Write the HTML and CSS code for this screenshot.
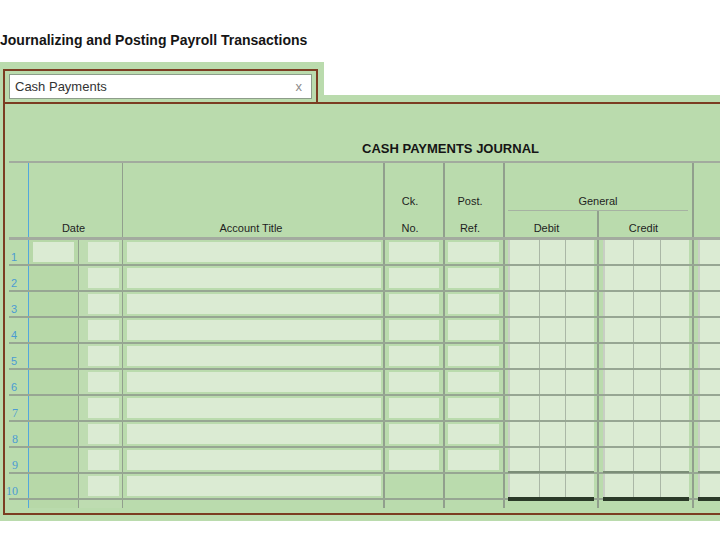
FILE: index.html
```html
<!DOCTYPE html>
<html lang="en">
<head>
<meta charset="utf-8">
<title>Cash Payments Journal</title>
<link rel="stylesheet" href="styles.css">
</head>
<body>
<h1 class="title">Journalizing and Posting Payroll Transactions</h1>

<div class="tabs">
  <div class="tab-outer">
    <div class="tab-box">
      <div class="search"><span>Cash Payments</span><span class="close">x</span></div>
    </div>
  </div>
  <div class="tab-rest"></div>
</div>

<div class="sheet">
  <div class="panel">
    <div class="jtitle">CASH PAYMENTS JOURNAL</div>
    <div class="table">
      <div class="hdr">
        <div class="h num"></div>
        <div class="h date"><span>Date</span></div>
        <div class="h acct"><span>Account Title</span></div>
        <div class="h ck"><span>Ck.</span><span class="l2">No.</span></div>
        <div class="h post"><span>Post.</span><span class="l2">Ref.</span></div>
        <div class="h gen">
          <span>General</span>
          <div class="gsub"><span class="gdeb">Debit</span><span class="gcred">Credit</span></div>
        </div>
        <div class="h ext"></div>
      </div>

      <div class="row">
        <div class="c num">1</div>
        <div class="c mon"><span class="f"></span></div>
        <div class="c day"><span class="f"></span></div>
        <div class="c acct"><span class="f"></span></div>
        <div class="c ck"><span class="f"></span></div>
        <div class="c post"><span class="f"></span></div>
        <div class="c deb"><span class="f"><i></i><i></i><i></i></span></div>
        <div class="c cred"><span class="f"><i></i><i></i><i></i></span></div>
        <div class="c ext"><span class="f"><i></i></span></div>
      </div>
      <div class="row">
        <div class="c num">2</div>
        <div class="c mon"></div>
        <div class="c day"><span class="f"></span></div>
        <div class="c acct"><span class="f"></span></div>
        <div class="c ck"><span class="f"></span></div>
        <div class="c post"><span class="f"></span></div>
        <div class="c deb"><span class="f"><i></i><i></i><i></i></span></div>
        <div class="c cred"><span class="f"><i></i><i></i><i></i></span></div>
        <div class="c ext"><span class="f"><i></i></span></div>
      </div>
      <div class="row">
        <div class="c num">3</div>
        <div class="c mon"></div>
        <div class="c day"><span class="f"></span></div>
        <div class="c acct"><span class="f"></span></div>
        <div class="c ck"><span class="f"></span></div>
        <div class="c post"><span class="f"></span></div>
        <div class="c deb"><span class="f"><i></i><i></i><i></i></span></div>
        <div class="c cred"><span class="f"><i></i><i></i><i></i></span></div>
        <div class="c ext"><span class="f"><i></i></span></div>
      </div>
      <div class="row">
        <div class="c num">4</div>
        <div class="c mon"></div>
        <div class="c day"><span class="f"></span></div>
        <div class="c acct"><span class="f"></span></div>
        <div class="c ck"><span class="f"></span></div>
        <div class="c post"><span class="f"></span></div>
        <div class="c deb"><span class="f"><i></i><i></i><i></i></span></div>
        <div class="c cred"><span class="f"><i></i><i></i><i></i></span></div>
        <div class="c ext"><span class="f"><i></i></span></div>
      </div>
      <div class="row">
        <div class="c num">5</div>
        <div class="c mon"></div>
        <div class="c day"><span class="f"></span></div>
        <div class="c acct"><span class="f"></span></div>
        <div class="c ck"><span class="f"></span></div>
        <div class="c post"><span class="f"></span></div>
        <div class="c deb"><span class="f"><i></i><i></i><i></i></span></div>
        <div class="c cred"><span class="f"><i></i><i></i><i></i></span></div>
        <div class="c ext"><span class="f"><i></i></span></div>
      </div>
      <div class="row">
        <div class="c num">6</div>
        <div class="c mon"></div>
        <div class="c day"><span class="f"></span></div>
        <div class="c acct"><span class="f"></span></div>
        <div class="c ck"><span class="f"></span></div>
        <div class="c post"><span class="f"></span></div>
        <div class="c deb"><span class="f"><i></i><i></i><i></i></span></div>
        <div class="c cred"><span class="f"><i></i><i></i><i></i></span></div>
        <div class="c ext"><span class="f"><i></i></span></div>
      </div>
      <div class="row">
        <div class="c num sf">7</div>
        <div class="c mon"></div>
        <div class="c day"><span class="f"></span></div>
        <div class="c acct"><span class="f"></span></div>
        <div class="c ck"><span class="f"></span></div>
        <div class="c post"><span class="f"></span></div>
        <div class="c deb"><span class="f"><i></i><i></i><i></i></span></div>
        <div class="c cred"><span class="f"><i></i><i></i><i></i></span></div>
        <div class="c ext"><span class="f"><i></i></span></div>
      </div>
      <div class="row">
        <div class="c num sf">8</div>
        <div class="c mon"></div>
        <div class="c day"><span class="f"></span></div>
        <div class="c acct"><span class="f"></span></div>
        <div class="c ck"><span class="f"></span></div>
        <div class="c post"><span class="f"></span></div>
        <div class="c deb"><span class="f"><i></i><i></i><i></i></span></div>
        <div class="c cred"><span class="f"><i></i><i></i><i></i></span></div>
        <div class="c ext"><span class="f"><i></i></span></div>
      </div>
      <div class="row single">
        <div class="c num sf">9</div>
        <div class="c mon"></div>
        <div class="c day"><span class="f"></span></div>
        <div class="c acct"><span class="f"></span></div>
        <div class="c ck"><span class="f"></span></div>
        <div class="c post"><span class="f"></span></div>
        <div class="c deb"><span class="f"><i></i><i></i><i></i></span></div>
        <div class="c cred"><span class="f"><i></i><i></i><i></i></span></div>
        <div class="c ext"><span class="f"><i></i></span></div>
      </div>
      <div class="row double">
        <div class="c num sf">10</div>
        <div class="c mon"></div>
        <div class="c day"><span class="f"></span></div>
        <div class="c acct"><span class="f"></span></div>
        <div class="c ck"></div>
        <div class="c post"></div>
        <div class="c deb"><span class="f"><i></i><i></i><i></i></span></div>
        <div class="c cred"><span class="f"><i></i><i></i><i></i></span></div>
        <div class="c ext"><span class="f"><i></i></span></div>
      </div>
      <div class="foot">
        <div class="c num"></div>
        <div class="c mon"></div>
        <div class="c day"></div>
        <div class="c acct"></div>
        <div class="c ck"></div>
        <div class="c post"></div>
        <div class="c deb"></div>
        <div class="c cred"></div>
        <div class="c ext"></div>
      </div>
    </div>
  </div>
</div>
</body>
</html>
```

FILE: styles.css
```css
:root {
  --g: #badbad;
  --cell: #dbebd3;
  --brown: #7b3d22;
  --rowline: #97a693;
  --vline: #919f8d;
  --blue: #52a7dc;
  --cols: 20px 50px 44px 262px 60px 60px 94px 95px 1fr;
}

html, body {
  margin: 0;
  background: #fff;
}

body {
  width: 720px;
  height: 540px;
  overflow: hidden;
  font-family: "Liberation Sans", Arial, sans-serif;
  color: #222;
}

.title {
  margin: 0;
  padding-top: 32px;
  font-size: 14px;
  line-height: 16px;
  font-weight: bold;
  color: #151515;
}

.tabs {
  display: flex;
  align-items: flex-end;
  margin-top: 14px;
}

.tab-outer {
  width: 324px;
  box-sizing: border-box;
  background: var(--g);
  padding: 7px 6px 0 3px;
}

.tab-box {
  border: 2px solid var(--brown);
  border-bottom: 0;
  padding: 3px 4px;
}

.search {
  height: 25px;
  box-sizing: border-box;
  border: 1px solid #8d9d8a;
  background: #fff;
  display: flex;
  align-items: center;
  justify-content: space-between;
  padding: 0 9px 0 5px;
  font-size: 13px;
  color: #333;
}

.close {
  color: #8c8c8c;
  font-size: 13px;
}

.tab-rest {
  flex: 1;
  height: 7px;
  background: var(--g);
}

.sheet {
  background: var(--g);
  padding: 0 0 6px 3px;
}

.panel {
  border: 2px solid var(--brown);
  border-right: 0;
  padding: 37px 0 5px 4px;
}

.jtitle {
  margin-left: 353px;
  font-size: 13px;
  line-height: 16px;
  font-weight: bold;
  color: #151515;
}

.table {
  margin-top: 4px;
  border-top: 2px solid #a2ab9e;
}

/* header */
.hdr {
  display: grid;
  grid-template-columns: var(--cols);
  height: 74px;
  border-bottom: 3px solid #a3ab9f;
  font-size: 11px;
  line-height: 13px;
  color: #1e1e1e;
}

.h {
  display: flex;
  flex-direction: column;
  justify-content: flex-end;
  align-items: center;
  padding: 0 4px 2px 0;
  box-sizing: border-box;
  min-width: 0;
}

.h.num { border-right: 1px solid var(--blue); }
.h.date { grid-column: 2 / 4; border-right: 1px solid var(--vline); }
.h.acct { border-right: 2px solid var(--vline); }
.h.ck, .h.post { border-right: 2px solid var(--vline); padding-right: 8px; }
.h .l2 { margin-top: 14px; }

.h.gen {
  grid-column: 7 / 9;
  border-right: 2px solid var(--vline);
  padding: 0 4px 0 3px;
  align-items: stretch;
  text-align: center;
}

.gsub {
  margin-top: 2px;
  border-top: 1px solid #a6b2a2;
  display: grid;
  grid-template-columns: 91px 1fr;
}

.gsub span {
  padding: 11px 0 2px;
}

.gdeb {
  border-right: 2px solid var(--vline);
  padding-right: 12px !important;
}

/* body rows */
.row, .foot {
  display: grid;
  grid-template-columns: var(--cols);
}

.row {
  height: 26px;
  box-sizing: border-box;
  border-bottom: 2px solid var(--rowline);
}

.foot { height: 8px; }

.c {
  display: flex;
  box-sizing: border-box;
  min-width: 0;
}

.c.num { border-right: 1px solid var(--blue); }
.c.mon { border-right: 1px solid var(--vline); background: #b7d8a8; }
.c.day { border-right: 1px solid var(--vline); background: #bedcb1; }
.c.acct, .c.ck, .c.post, .c.deb, .c.cred { border-right: 2px solid var(--vline); }

.f {
  flex: 1;
  margin: 2px 4px;
  background: var(--cell);
}

.mon .f { margin: 2px 4px; }
.day .f { margin: 2px 3px 2px 9px; }
.acct .f { margin: 2px 2px 2px 4px; }
.ck .f { margin: 2px 4px 2px 4px; }
.post .f { margin: 2px 4px 2px 3px; }

.deb .f, .cred .f, .ext .f {
  display: grid;
  margin: 0 3px 0 3px;
}

.deb .f { grid-template-columns: 31px 26px 1fr; }
.cred .f { grid-template-columns: 30px 27px 1fr; margin-left: 4px; }
.ext .f { grid-template-columns: 1fr; margin: 0 0 0 4px; }

.f i {
  border-left: 1px solid #aab7a6;
}

.f i:first-child {
  border-left: 2px solid #c8cec4;
}

.row.single .deb .f,
.row.single .cred .f,
.row.single .ext .f {
  border-bottom: 2px solid #7c8e78;
  margin-bottom: -1px;
}

.row.double .deb .f,
.row.double .cred .f,
.row.double .ext .f {
  border-bottom: 4px solid #2b3a28;
  margin-bottom: -3px;
}

.row .num {
  justify-content: flex-end;
  align-items: flex-end;
  padding: 0 11px 1px 0;
  color: #4b9bd3;
  font-size: 11px;
  line-height: 12px;
}

.row .num.sf {
  font-family: "Liberation Serif", "Times New Roman", serif;
  font-size: 12px;
  padding-right: 10px;
}
```
